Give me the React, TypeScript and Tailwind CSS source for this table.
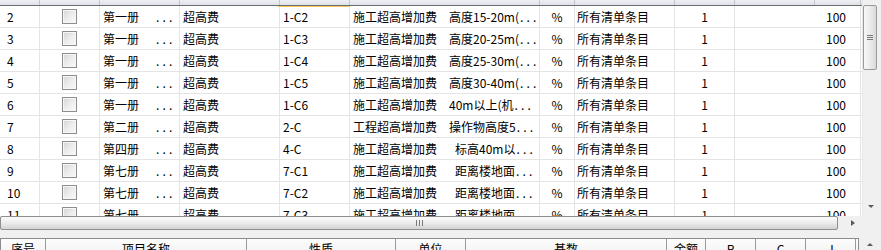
import React from 'react';

type Row = {
  no: string;
  book: string;
  kind: string;
  code: string;
  name: string;
  desc: string;
  gap: string;
};

const rows: Row[] = [
  { no: '2', book: '第一册', kind: '超高费', code: '1-C2', name: '施工超高增加费', desc: '高度15-20m(', gap: 'ml-[12px]' },
  { no: '3', book: '第一册', kind: '超高费', code: '1-C3', name: '施工超高增加费', desc: '高度20-25m(', gap: 'ml-[12px]' },
  { no: '4', book: '第一册', kind: '超高费', code: '1-C4', name: '施工超高增加费', desc: '高度25-30m(', gap: 'ml-[12px]' },
  { no: '5', book: '第一册', kind: '超高费', code: '1-C5', name: '施工超高增加费', desc: '高度30-40m(', gap: 'ml-[12px]' },
  { no: '6', book: '第一册', kind: '超高费', code: '1-C6', name: '施工超高增加费', desc: '40m以上(机', gap: 'ml-[12px]' },
  { no: '7', book: '第二册', kind: '超高费', code: '2-C', name: '工程超高增加费', desc: '操作物高度5', gap: 'ml-[12px]' },
  { no: '8', book: '第四册', kind: '超高费', code: '4-C', name: '施工超高增加费', desc: '标高40m以', gap: 'ml-[18px]' },
  { no: '9', book: '第七册', kind: '超高费', code: '7-C1', name: '施工超高增加费', desc: '距离楼地面', gap: 'ml-[18px]' },
  { no: '10', book: '第七册', kind: '超高费', code: '7-C2', name: '施工超高增加费', desc: '距离楼地面', gap: 'ml-[18px]' },
  { no: '11', book: '第七册', kind: '超高费', code: '7-C3', name: '施工超高增加费', desc: '距离楼地面', gap: 'ml-[18px]' },
];

const Dots = () => <span className="tracking-[3.2px] pl-[1px]">...</span>;

const CheckBox = () => (
  <div className="w-[15px] h-[15px] border border-[#8d8d8d] bg-gradient-to-br from-[#d4d4d4] via-[#ececec] to-[#fafafa] shadow-[inset_0_0_0_1px_#f6f6f6]" />
);

const cell = 'h-full flex items-center border-r border-[#e4e4e4] shrink-0 overflow-hidden whitespace-nowrap';

function GridRow({ r }: { r: Row }) {
  return (
    <div className="flex h-[22px] border-b border-[#e4e4e4]">
      <div className={`${cell} w-[40px] pl-[7px]`}>{r.no}</div>
      <div className={`${cell} w-[60px] justify-center`}>
        <CheckBox />
      </div>
      <div className={`${cell} w-[80px] pl-[3px]`}>
        <span>{r.book}</span>
        <span className="ml-[16px]">
          <Dots />
        </span>
      </div>
      <div className={`${cell} w-[100px] pl-[3px]`}>{r.kind}</div>
      <div className={`${cell} w-[70px] pl-[3px]`}>{r.code}</div>
      <div className={`${cell} w-[190px] pl-[3px]`}>
        <span>{r.name}</span>
        <span className={r.gap}>
          {r.desc}
          <Dots />
        </span>
      </div>
      <div className={`${cell} w-[35px] justify-center`}>%</div>
      <div className={`${cell} w-[100px] pl-[2px]`}>所有清单条目</div>
      <div className={`${cell} w-[60px] justify-center`}>1</div>
      <div className={`${cell} w-[126px] justify-end pr-[14px]`}>100</div>
    </div>
  );
}

const headWidths = ['w-[40px]', 'w-[60px]', 'w-[80px]', 'w-[100px]', 'w-[70px]', 'w-[190px]', 'w-[35px]', 'w-[100px]', 'w-[60px]', 'w-[80px]', 'w-[46px]'];

const bottomCols = [
  { w: 'w-[45px]', t: '序号' },
  { w: 'w-[201px]', t: '项目名称' },
  { w: 'w-[149px]', t: '性质' },
  { w: 'w-[70px]', t: '单位' },
  { w: 'w-[201px]', t: '基数' },
  { w: 'w-[39px]', t: '金额' },
  { w: 'w-[50px]', t: 'R' },
  { w: 'w-[50px]', t: 'C' },
  { w: 'w-[50px]', t: 'J' },
];

export default function App() {
  return (
    <div className="w-[881px] h-[250px] overflow-hidden bg-[#f0f0f0] flex flex-col text-[12px] leading-[14px] text-black font-['Noto_Sans_CJK_SC','Noto_Sans',sans-serif]">
      <div className="flex h-[216px] shrink-0">
        {/* upper grid */}
        <div className="w-[862px] bg-white flex flex-col">
          <div className="flex h-[6px] shrink-0 bg-gradient-to-b from-[#eef0f3] to-[#dfe2e7] border-b border-[#6b6d70]">
            {headWidths.map((w, i) => (
              <div key={i} className={`${w} h-full shrink-0 border-r border-[#c3c6cb] relative`}>
                {i === 4 && <span className="absolute left-[-2px] right-[-1px] top-[6px] h-[1px] bg-[#f7c55a]" />}
              </div>
            ))}
          </div>
          <div className="h-[210px] overflow-hidden">
            {rows.map((r) => (
              <GridRow key={r.no} r={r} />
            ))}
          </div>
        </div>
        {/* vertical scrollbar */}
        <div className="w-[19px] bg-[#f0f0f0] border-l border-[#e8e8e8] flex flex-col items-start">
          <div className="mt-[5px] w-[14px] h-[65px] rounded-[2px] border border-[#9a9a9a] bg-gradient-to-r from-[#f7f7f7] via-[#ebebeb] to-[#d9d9d9] flex flex-col items-center justify-center gap-[1px]">
            <span className="w-[6px] h-[1px] bg-[#7a7a7a]" />
            <span className="w-[6px] h-[1px] bg-[#7a7a7a]" />
            <span className="w-[6px] h-[1px] bg-[#7a7a7a]" />
          </div>
          <div className="mt-auto mb-[8px] ml-[5px] w-0 h-0 border-l-[3px] border-r-[3px] border-t-[3px] border-l-transparent border-r-transparent border-t-[#5a5a5a]" />
        </div>
      </div>

      {/* horizontal scrollbar */}
      <div className="flex h-[14px] shrink-0">
        <div className="w-[862px] flex items-center bg-[#f0f0f0]">
          <div className="w-[838px] h-[14px] rounded-[2px] border border-[#8f8f8f] bg-gradient-to-b from-[#fbfbfb] via-[#ececec] to-[#d3d3d3] flex items-center justify-center gap-[2px]">
            <span className="w-[1px] h-[6px] bg-[#7a7a7a]" />
            <span className="w-[1px] h-[6px] bg-[#7a7a7a]" />
            <span className="w-[1px] h-[6px] bg-[#7a7a7a]" />
          </div>
          <div className="ml-[13px] w-0 h-0 border-t-[3px] border-b-[3px] border-l-[4px] border-t-transparent border-b-transparent border-l-[#5a5a5a]" />
        </div>
        <div className="flex-1 bg-[#f0f0f0]" />
      </div>

      <div className="h-[8px] shrink-0" />

      {/* lower grid header */}
      <div className="flex flex-1">
        <div className="w-[859px] border-t border-l border-r border-[#8c8c8c] bg-gradient-to-b from-[#fdfdfd] to-[#f1f1f1] flex">
          {bottomCols.map((c) => (
            <div key={c.t} className={`${c.w} shrink-0 border-r border-[#9a9a9a] flex justify-center pt-[3px]`}>
              {c.t}
            </div>
          ))}
        </div>
        <div className="flex-1 flex justify-center pt-[5px]">
          <div className="w-0 h-0 border-l-[3px] border-r-[3px] border-b-[3px] border-l-transparent border-r-transparent border-b-[#5a5a5a]" />
        </div>
      </div>
    </div>
  );
}
